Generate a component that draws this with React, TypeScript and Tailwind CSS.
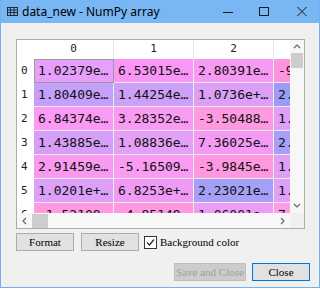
import React from 'react';

const rows: { text: string[]; bg: string[] }[] = [
  { text: ['1.02379e…', '6.53015e…', '2.80391e…', '-9'], bg: ['#e6a0fb', '#fa96f5', '#f79af3', '#ff94de'] },
  { text: ['1.80409e…', '1.44254e…', '1.0736e+…', '2.'], bg: ['#c4a0fb', '#cda0f7', '#dc9ff7', '#9c9cf5'] },
  { text: ['6.84374e…', '3.28352e…', '-3.50488…', '1.'], bg: ['#fa9af5', '#f99af3', '#ff9ae0', '#e09ff7'] },
  { text: ['1.43885e…', '1.08836e…', '7.36025e…', '2.'], bg: ['#d69ef7', '#e49ff7', '#f49af5', '#a8a0f8'] },
  { text: ['2.91459e…', '-5.16509…', '-3.9845e…', '1.'], bg: ['#f99af0', '#fa9cf3', '#ff98e0', '#e09ff5'] },
  { text: ['1.0201e+…', '6.8253e+…', '2.23021e…', '1.'], bg: ['#dca0f8', '#f09af6', '#a5a0f5', '#dfa0f7'] },
  { text: ['-1.52108…', '-4.85149…', '1.06001e…', '7.'], bg: ['#ff9ae0', '#ff98e0', '#ed9cf5', '#ff9ae5'] },
];

const Chevron = ({ dir }: { dir: 'up' | 'down' | 'left' | 'right' }) => {
  const pts = {
    up: '1,5 4,2 7,5',
    down: '1,2 4,5 7,2',
    left: '5,1 2,4 5,7',
    right: '2,1 5,4 2,7',
  }[dir];
  return (
    <svg width="8" height="8" viewBox="0 0 8 8">
      <polyline points={pts} fill="none" stroke="#606060" strokeWidth="1.1" />
    </svg>
  );
};

function Button({ label, w, variant }: { label: string; w: string; variant?: 'default' | 'disabled' }) {
  const cls =
    variant === 'disabled'
      ? 'bg-[#cccccc] border-[#bfbfbf] text-[#a0a0a0]'
      : variant === 'default'
      ? 'bg-[#e1e1e1] border-[#0078d7] text-black'
      : 'bg-[#e1e1e1] border-[#adadad] text-black';
  return (
    <div className={`${w} h-[18px] border flex items-center justify-center text-[11px] leading-none ${cls}`} style={{ fontFamily: '"Liberation Serif", serif' }}>
      {label}
    </div>
  );
}

export default function App() {
  return (
    <div className="w-[320px] h-[290px] bg-white">
      <div className="w-[320px] h-[288px] flex flex-col border-x border-b border-[#72b1f1]">
        {/* title bar */}
        <div className="h-[23px] bg-[#78b6f4] flex items-center relative" style={{ fontFamily: '"Noto Sans", sans-serif' }}>
          <svg className="ml-[6px]" width="11" height="9" viewBox="0 0 11 9">
            <rect x="0.5" y="0.5" width="10" height="8" fill="none" stroke="#1e2a38" />
            <line x1="0" y1="3" x2="11" y2="3" stroke="#1e2a38" />
            <line x1="0" y1="5.5" x2="11" y2="5.5" stroke="#1e2a38" />
            <line x1="3.5" y1="0" x2="3.5" y2="9" stroke="#1e2a38" />
            <line x1="7" y1="0" x2="7" y2="9" stroke="#1e2a38" />
          </svg>
          <span className="ml-[4px] text-[12px] text-black leading-none">data_new - NumPy array</span>
          <div className="ml-auto flex items-center h-full">
            <svg className="mr-[26px]" width="10" height="10" viewBox="0 0 10 10">
              <line x1="0" y1="5.5" x2="10" y2="5.5" stroke="#1a1a1a" />
            </svg>
            <svg className="mr-[28px]" width="10" height="10" viewBox="0 0 10 10">
              <rect x="0.5" y="0.5" width="9" height="8" fill="none" stroke="#1a1a1a" />
            </svg>
            <svg className="mr-[12px]" width="10" height="10" viewBox="0 0 10 10">
              <line x1="0.5" y1="0" x2="9.5" y2="9" stroke="#1a1a1a" />
              <line x1="9.5" y1="0" x2="0.5" y2="9" stroke="#1a1a1a" />
            </svg>
          </div>
        </div>

        {/* body */}
        <div className="flex-1 bg-[#f0f0f0] flex flex-col pl-[15px] pr-[9px] pt-[16px]">
          <div className="w-[289px] h-[190px] border border-[#adadad] flex flex-col bg-white">
            <div className="flex h-[173px]">
              <div className="w-[273px] overflow-hidden flex flex-col">
                <div className="flex h-[19px] shrink-0 bg-white" style={{ fontFamily: '"DejaVu Sans Mono", monospace' }}>
                  <div className="w-[17px] shrink-0" />
                  {['0', '1', '2', '3'].map((h) => (
                    <div key={h} className="w-[80px] shrink-0 border-r border-[#e5e5e5] flex items-center justify-center text-[11px] text-[#222]">
                      {h}
                    </div>
                  ))}
                </div>
                {rows.map((r, i) => (
                  <div key={i} className="flex h-[24px] shrink-0" style={{ fontFamily: '"DejaVu Sans Mono", monospace' }}>
                    <div className="w-[17px] shrink-0 bg-white flex items-center pl-[4px] text-[11px] text-[#222]">{i}</div>
                    {r.text.map((t, j) => (
                      <div
                        key={j}
                        className={`w-[80px] shrink-0 h-[24px] flex items-center pl-[4px] text-[13px] text-[#111] whitespace-nowrap overflow-hidden border-r border-b border-[#ececec] ${
                          i === 0 && j === 0 ? 'outline outline-1 -outline-offset-1 outline-[#9a9a9a]' : ''
                        }`}
                        style={{ backgroundColor: r.bg[j] }}
                      >
                        {t}
                      </div>
                    ))}
                  </div>
                ))}
              </div>
              {/* vertical scrollbar */}
              <div className="w-[14px] bg-[#f7f7f7] flex flex-col items-center">
                <div className="h-[13px] flex items-center justify-center pt-[1px]">
                  <Chevron dir="up" />
                </div>
                <div className="w-[12px] h-[15px] bg-[#cdcdcd]" />
                <div className="flex-1" />
                <div className="h-[14px] flex items-center justify-center">
                  <Chevron dir="down" />
                </div>
              </div>
            </div>
            {/* horizontal scrollbar */}
            <div className="flex h-[15px]">
              <div className="w-[273px] bg-[#f7f7f7] flex items-center">
                <div className="w-[15px] flex items-center justify-center">
                  <Chevron dir="left" />
                </div>
                <div className="w-[16px] h-[14px] bg-[#cdcdcd]" />
                <div className="flex-1" />
                <div className="w-[14px] flex items-center justify-center">
                  <Chevron dir="right" />
                </div>
              </div>
              <div className="w-[14px] bg-[#f0f0f0]" />
            </div>
          </div>

          {/* buttons row 1 */}
          <div className="flex items-center mt-[4px] gap-[7px]">
            <Button label="Format" w="w-[58px]" />
            <Button label="Resize" w="w-[58px]" />
            <div className="flex items-center ml-[-2px] gap-[3px]">
              <div className="w-[13px] h-[13px] border border-[#333] bg-white flex items-center justify-center">
                <svg width="9" height="9" viewBox="0 0 9 9">
                  <polyline points="1,4.5 3.5,7 8,1.5" fill="none" stroke="#222" strokeWidth="1.2" />
                </svg>
              </div>
              <span className="text-[11px] text-black leading-none" style={{ fontFamily: '"Liberation Serif", serif' }}>
                Background color
              </span>
            </div>
          </div>

          {/* buttons row 2 */}
          <div className="flex justify-end gap-[6px] mt-[12px]">
            <Button label="Save and Close" w="w-[72px]" variant="disabled" />
            <Button label="Close" w="w-[58px]" variant="default" />
          </div>
        </div>
      </div>
    </div>
  );
}
